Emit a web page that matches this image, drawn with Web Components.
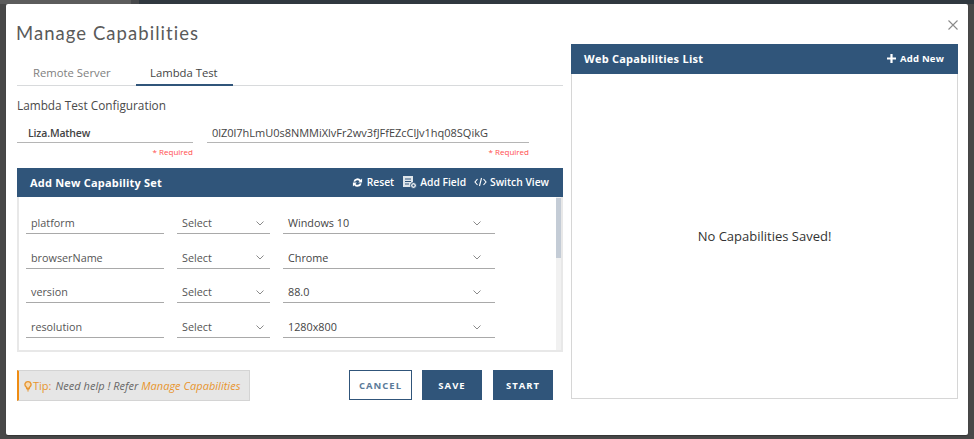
<!DOCTYPE html>
<html>
<head>
<meta charset="utf-8">
<title>Manage Capabilities</title>
<style>
  html, body { margin: 0; height: 439px; overflow: hidden; }
  body {
    font-family: "Open Sans", "Noto Sans", sans-serif;
    background: linear-gradient(90deg, #5c5c5c 131px, #47494b 131px, #47494b 139px, #30383f 139px) top / 100% 4px no-repeat, #484848;
  }
</style>
</head>
<body>
<cap-dialog heading="Manage Capabilities">
  <cap-tabs slot="tabs"></cap-tabs>
  <div slot="left" style="font-size:11.800px;color:#4a4a4a;height:17px;line-height:17px;margin-top:11px;margin-bottom:-1px">Lambda Test Configuration</div>
  <cap-credentials slot="left"></cap-credentials>
  <cap-set slot="left">
    <cap-row name="platform" value="Windows 10"></cap-row>
    <cap-row name="browserName" value="Chrome"></cap-row>
    <cap-row name="version" value="88.0"></cap-row>
    <cap-row name="resolution" value="1280x800"></cap-row>
  </cap-set>
  <cap-footer slot="left"></cap-footer>
  <cap-list slot="right"></cap-list>
</cap-dialog>

<script>
const BAR = '#30557a';

class CapDialog extends HTMLElement {
  constructor() {
    super();
    this.attachShadow({ mode: 'open' }).innerHTML = `
      <style>
        :host { display: block; position: relative; box-sizing: border-box; width: 962px; height: 431px; margin: 4px 6px; background: #fff; padding: 0 10px 0 11px; border-radius: 2px; box-shadow: 0 1px 1px #333; }
        .cols { display: grid; grid-template-columns: 546px 387px; column-gap: 8px; }
        h1 { margin: 0; font: 400 18.500px/29px Lato, sans-serif; letter-spacing: 1.050px; color: #5a5a5a; padding-top: 15px; margin-left: -1px; }
        .right { padding-top: 40px; }
        .close { position: absolute; top: 15px; right: 9px; width: 12px; height: 12px; }
      </style>
      <div class="cols">
        <div>
          <h1></h1>
          <slot name="tabs"></slot>
          <slot name="left"></slot>
        </div>
        <div class="right"><slot name="right"></slot></div>
      </div>
      <svg class="close" viewBox="0 0 12 12"><path d="M1.5 1.5l9 9M10.500 1.500l-9 9" stroke="#8a8a8a" stroke-width="1.100" fill="none"/></svg>`;
    this.shadowRoot.querySelector('h1').textContent = this.getAttribute('heading');
  }
}

class CapTabs extends HTMLElement {
  constructor() {
    super();
    this.attachShadow({ mode: 'open' }).innerHTML = `
      <style>
        :host { display: flex; height: 38px; box-sizing: border-box; padding-top: 14px; border-bottom: 1px solid #d8dadc; font-size: 11.300px; line-height: 22px; }
        div { box-sizing: border-box; height: 24px; }
        .off { width: 119px; padding-left: 16px; color: #808080; }
        .on { width: 97px; padding-left: 14px; color: #444; border-bottom: 2px solid ${BAR}; }
      </style>
      <div class="off">Remote Server</div>
      <div class="on">Lambda Test</div>`;
  }
}

class CapCredentials extends HTMLElement {
  constructor() {
    super();
    this.attachShadow({ mode: 'open' }).innerHTML = `
      <style>
        :host { display: flex; gap: 14px; margin-top: 2px; height: 46px; }
        .f { display: flex; flex-direction: column; }
        .v { flex: none; box-sizing: border-box; height: 28px; padding-top: 8px; line-height: 20px; border-bottom: 1px solid #b5b5b5; font-size: 11px; color: #444; white-space: nowrap; overflow: hidden; }
        .r { flex: none; text-align: right; font-size: 8px; line-height: 18px; color: #ff4d4d; }
        .user { width: 176px; } .user .v { padding-left: 11px; font-weight: 600; font-size: 10.500px; letter-spacing: -.15px; }
        .key { width: 322px; } .key .v { padding-left: 5px; letter-spacing: -.02px; }
      </style>
      <div class="f user"><div class="v">Liza.Mathew</div><div class="r">* Required</div></div>
      <div class="f key"><div class="v">0lZ0l7hLmU0s8NMMiXlvFr2wv3fJFfEZcClJv1hq08SQikG</div><div class="r">* Required</div></div>`;
  }
}

class CapSet extends HTMLElement {
  constructor() {
    super();
    this.attachShadow({ mode: 'open' }).innerHTML = `
      <style>
        :host { display: block; margin-top: 7px; width: 546px; }
        .bar { display: flex; align-items: center; box-sizing: border-box; height: 29px; padding: 0 14px 1px 13px; background: ${BAR}; color: #fff; font-size: 10.300px; font-weight: 600; }
        .t { flex: 1; font-size: 11px; font-weight: 700; letter-spacing: .2px; }
        .a { display: flex; align-items: center; gap: 4px; margin-left: 8px; }
        .a + .a svg { margin-right: -1px; }
        .body { position: relative; box-sizing: border-box; height: 155px; border: 2px solid #e8e8e8; border-top: 0; padding: 1px 0 0 7px; overflow: hidden; }
        .track { position: absolute; right: 0; top: 0; bottom: 0; width: 5px; background: #f1f1f1; }
        .thumb { width: 5px; height: 60px; margin-top: 1px; background: #c4ccd6; }
      </style>
      <div class="bar">
        <div class="t">Add New Capability Set</div>
        <div class="a" style="margin-right:1px"><svg width="11" height="11" viewBox="0 0 12 12"><path d="M1.500 5A4.700 4.700 0 0 1 9.600 3.100L11 1.700V6H6.700l1.500-1.500A2.800 2.800 0 0 0 3.400 5.200zM10.500 7A4.700 4.700 0 0 1 2.400 8.900L1 10.300V6h4.300L3.800 7.500A2.800 2.800 0 0 0 8.600 6.800z" fill="#fff"/></svg>Reset</div>
        <div class="a"><svg width="14" height="13" viewBox="0 0 14 13"><path d="M0 0h10v11H0z" fill="#dfe5ea"/><path d="M2 3h6M2 5.500h6M2 8h4" stroke="${BAR}" stroke-width="1"/><circle cx="10.500" cy="9.500" r="3" fill="#dfe5ea" stroke="${BAR}"/><circle cx="10.500" cy="9.500" r="1" fill="${BAR}"/></svg>Add Field</div>
        <div class="a"><svg width="13" height="10" viewBox="0 0 13 10"><path d="M3.500 2L1 5l2.500 3M9.500 2L12 5 9.500 8M7.500 1L5.500 9" stroke="#fff" stroke-width="1.100" fill="none"/></svg>Switch View</div>
      </div>
      <div class="body">
        <slot></slot>
        <div class="track"><div class="thumb"></div></div>
      </div>`;
  }
}

class CapRow extends HTMLElement {
  constructor() {
    super();
    const chev = '<svg width="8" height="5" viewBox="0 0 8 5"><path d="M.5.500L4 4 7.500.500" stroke="#8a8a8a" fill="none"/></svg>';
    this.attachShadow({ mode: 'open' }).innerHTML = `
      <style>
        :host { display: flex; gap: 13px; height: 34.700px; box-sizing: border-box; padding-top: 12px; font-size: 10.800px; color: #555; }
        div { box-sizing: border-box; height: 24px; padding-top: 3px; line-height: 20px; border-bottom: 1px solid #a9a9a9; }
        .n { width: 138px; padding-left: 5px; }
        .s { display: flex; align-items: center; justify-content: space-between; padding: 3px 5px 0; }
        .s svg { margin-right: 1px; }
        .o { width: 93px; } .v { width: 212px; color: #444; }
      </style>
      <div class="n">${this.getAttribute('name')}</div>
      <div class="s o"><span>Select</span>${chev}</div>
      <div class="s v"><span>${this.getAttribute('value')}</span><span style="margin-right:8px;display:flex">${chev}</span></div>`;
  }
}

class CapFooter extends HTMLElement {
  constructor() {
    super();
    this.attachShadow({ mode: 'open' }).innerHTML = `
      <style>
        :host { display: flex; margin-top: 18px; width: 546px; align-items: flex-start; }
        .tip { box-sizing: border-box; width: 233px; height: 31px; display: flex; align-items: center; gap: 1px; padding-left: 5px; background: #e6e6e6; border: 1px solid #d4d4d4; border-left: 2px solid #ef8c12; font-size: 11px; white-space: nowrap; }
        .or { color: #e8952e; }
        i { color: #666; margin-left: 3px; letter-spacing: .03px; }
        i span { color: #e8952e; }
        .btns { display: flex; gap: 10px; margin-left: 99px; }
        button { box-sizing: border-box; height: 30px; width: 60px; padding: 0; border: 1px solid ${BAR}; background: ${BAR}; color: #fff; font: 700 9.500px "Open Sans", sans-serif; letter-spacing: 1px; }
        button:last-child { margin-left: 1px; }
        .c { width: 63px; background: #fff; color: #5b7a99; }
      </style>
      <div class="tip">
        <svg width="8" height="12" viewBox="0 0 9 12"><path d="M4.500 1A3.300 3.300 0 0 0 2.500 7L3 8.500h3L6.500 7A3.300 3.300 0 0 0 4.500 1z" fill="#f6d9b0" stroke="#e8952e" stroke-width="1.500"/><path d="M3 10h3M3.500 11.500h2" stroke="#e8952e"/></svg>
        <span class="or">Tip:</span>
        <i>Need help ! Refer <span>Manage Capabilities</span></i>
      </div>
      <div class="btns">
        <button class="c">CANCEL</button>
        <button>SAVE</button>
        <button>START</button>
      </div>`;
  }
}

class CapList extends HTMLElement {
  constructor() {
    super();
    this.attachShadow({ mode: 'open' }).innerHTML = `
      <style>
        :host { display: flex; flex-direction: column; width: 387px; height: 355px; }
        .bar { display: flex; align-items: center; justify-content: space-between; height: 30px; padding-bottom: 2px; box-sizing: border-box; background: ${BAR}; color: #fff; padding-left: 13px; padding-right: 14px; font-weight: 700; }
        .t { font-size: 11px; letter-spacing: .25px; }
        .a { display: flex; align-items: center; gap: 4px; font-size: 9.500px; letter-spacing: .2px; }
        .body { flex: 1; display: flex; align-items: center; justify-content: center; border: 1px solid #d6d6d6; border-top: 0; font-size: 13px; color: #333; padding-bottom: 1px; }
      </style>
      <div class="bar">
        <div class="t">Web Capabilities List</div>
        <div class="a"><svg width="9" height="9" viewBox="0 0 9 9"><path d="M3.400 0h2.200v3.400H9v2.200H5.600V9H3.400V5.600H0V3.400h3.400z" fill="#fff"/></svg>Add New</div>
      </div>
      <div class="body">No Capabilities Saved!</div>`;
  }
}

customElements.define('cap-dialog', CapDialog);
customElements.define('cap-tabs', CapTabs);
customElements.define('cap-credentials', CapCredentials);
customElements.define('cap-set', CapSet);
customElements.define('cap-row', CapRow);
customElements.define('cap-footer', CapFooter);
customElements.define('cap-list', CapList);
</script>
</body>
</html>
